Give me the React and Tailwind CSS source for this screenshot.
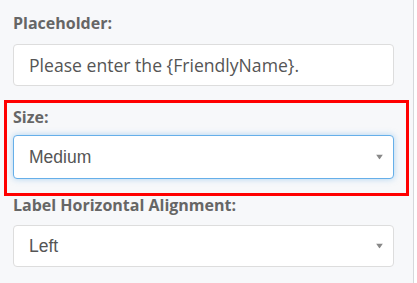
import React from "react";

function Arrow() {
  return (
    <svg width="7" height="5" viewBox="0 0 7 5" className="absolute right-[10px] top-1/2 -translate-y-1/2">
      <path d="M0 0 L7 0 L3.5 5 Z" fill="#888" />
    </svg>
  );
}

export default function App() {
  return (
    <div className="w-[417px] h-[283px] flex bg-white overflow-hidden">
      <div className="w-[414px] h-full bg-[#f7f8fa] border-r border-[#d6d8db] flex flex-col">
        <div className="pl-[13px] pr-[19px] pt-[13px]">
          <div className="text-[16px] leading-[20px] font-bold text-[#666]" style={{ fontFamily: '"Open Sans", sans-serif' }}>Placeholder:</div>
          <div className="mt-[11px] h-[42px] bg-white border border-[#ddd] rounded-[4px] flex items-center pl-[15px] text-[17.6px] text-[#555]" style={{ fontFamily: '"Open Sans", sans-serif' }}>
            Please enter the {"{FriendlyName}"}.
          </div>
        </div>
        <div className="ml-[4px] mr-[4px] mt-[14px] border-[3px] border-[#ff0000] pl-[6px] pr-[12px] pt-[4px] pb-[14px]">
          <div className="text-[16px] leading-[20px] font-bold text-[#666]" style={{ fontFamily: '"Open Sans", sans-serif' }}>Size:</div>
          <div className="relative mt-[8px] h-[44px] bg-white border border-[#66afe9] rounded-[4px] shadow-[0_0_6px_rgba(102,175,233,0.5)] flex items-center pl-[15px] text-[17.5px] text-[#555]" style={{ fontFamily: '"Liberation Sans", Arial, sans-serif' }}>
            Medium
            <Arrow />
          </div>
        </div>
        <div className="pl-[13px] pr-[19px] -mt-[1px]">
          <div className="text-[16px] leading-[20px] font-bold text-[#666]" style={{ fontFamily: '"Open Sans", sans-serif' }}>Label Horizontal Alignment:</div>
          <div className="relative mt-[10px] h-[42px] bg-white border border-[#ddd] rounded-[4px] flex items-center pl-[15px] text-[17.5px] text-[#555]" style={{ fontFamily: '"Liberation Sans", Arial, sans-serif' }}>
            Left
            <Arrow />
          </div>
        </div>
      </div>
    </div>
  );
}
